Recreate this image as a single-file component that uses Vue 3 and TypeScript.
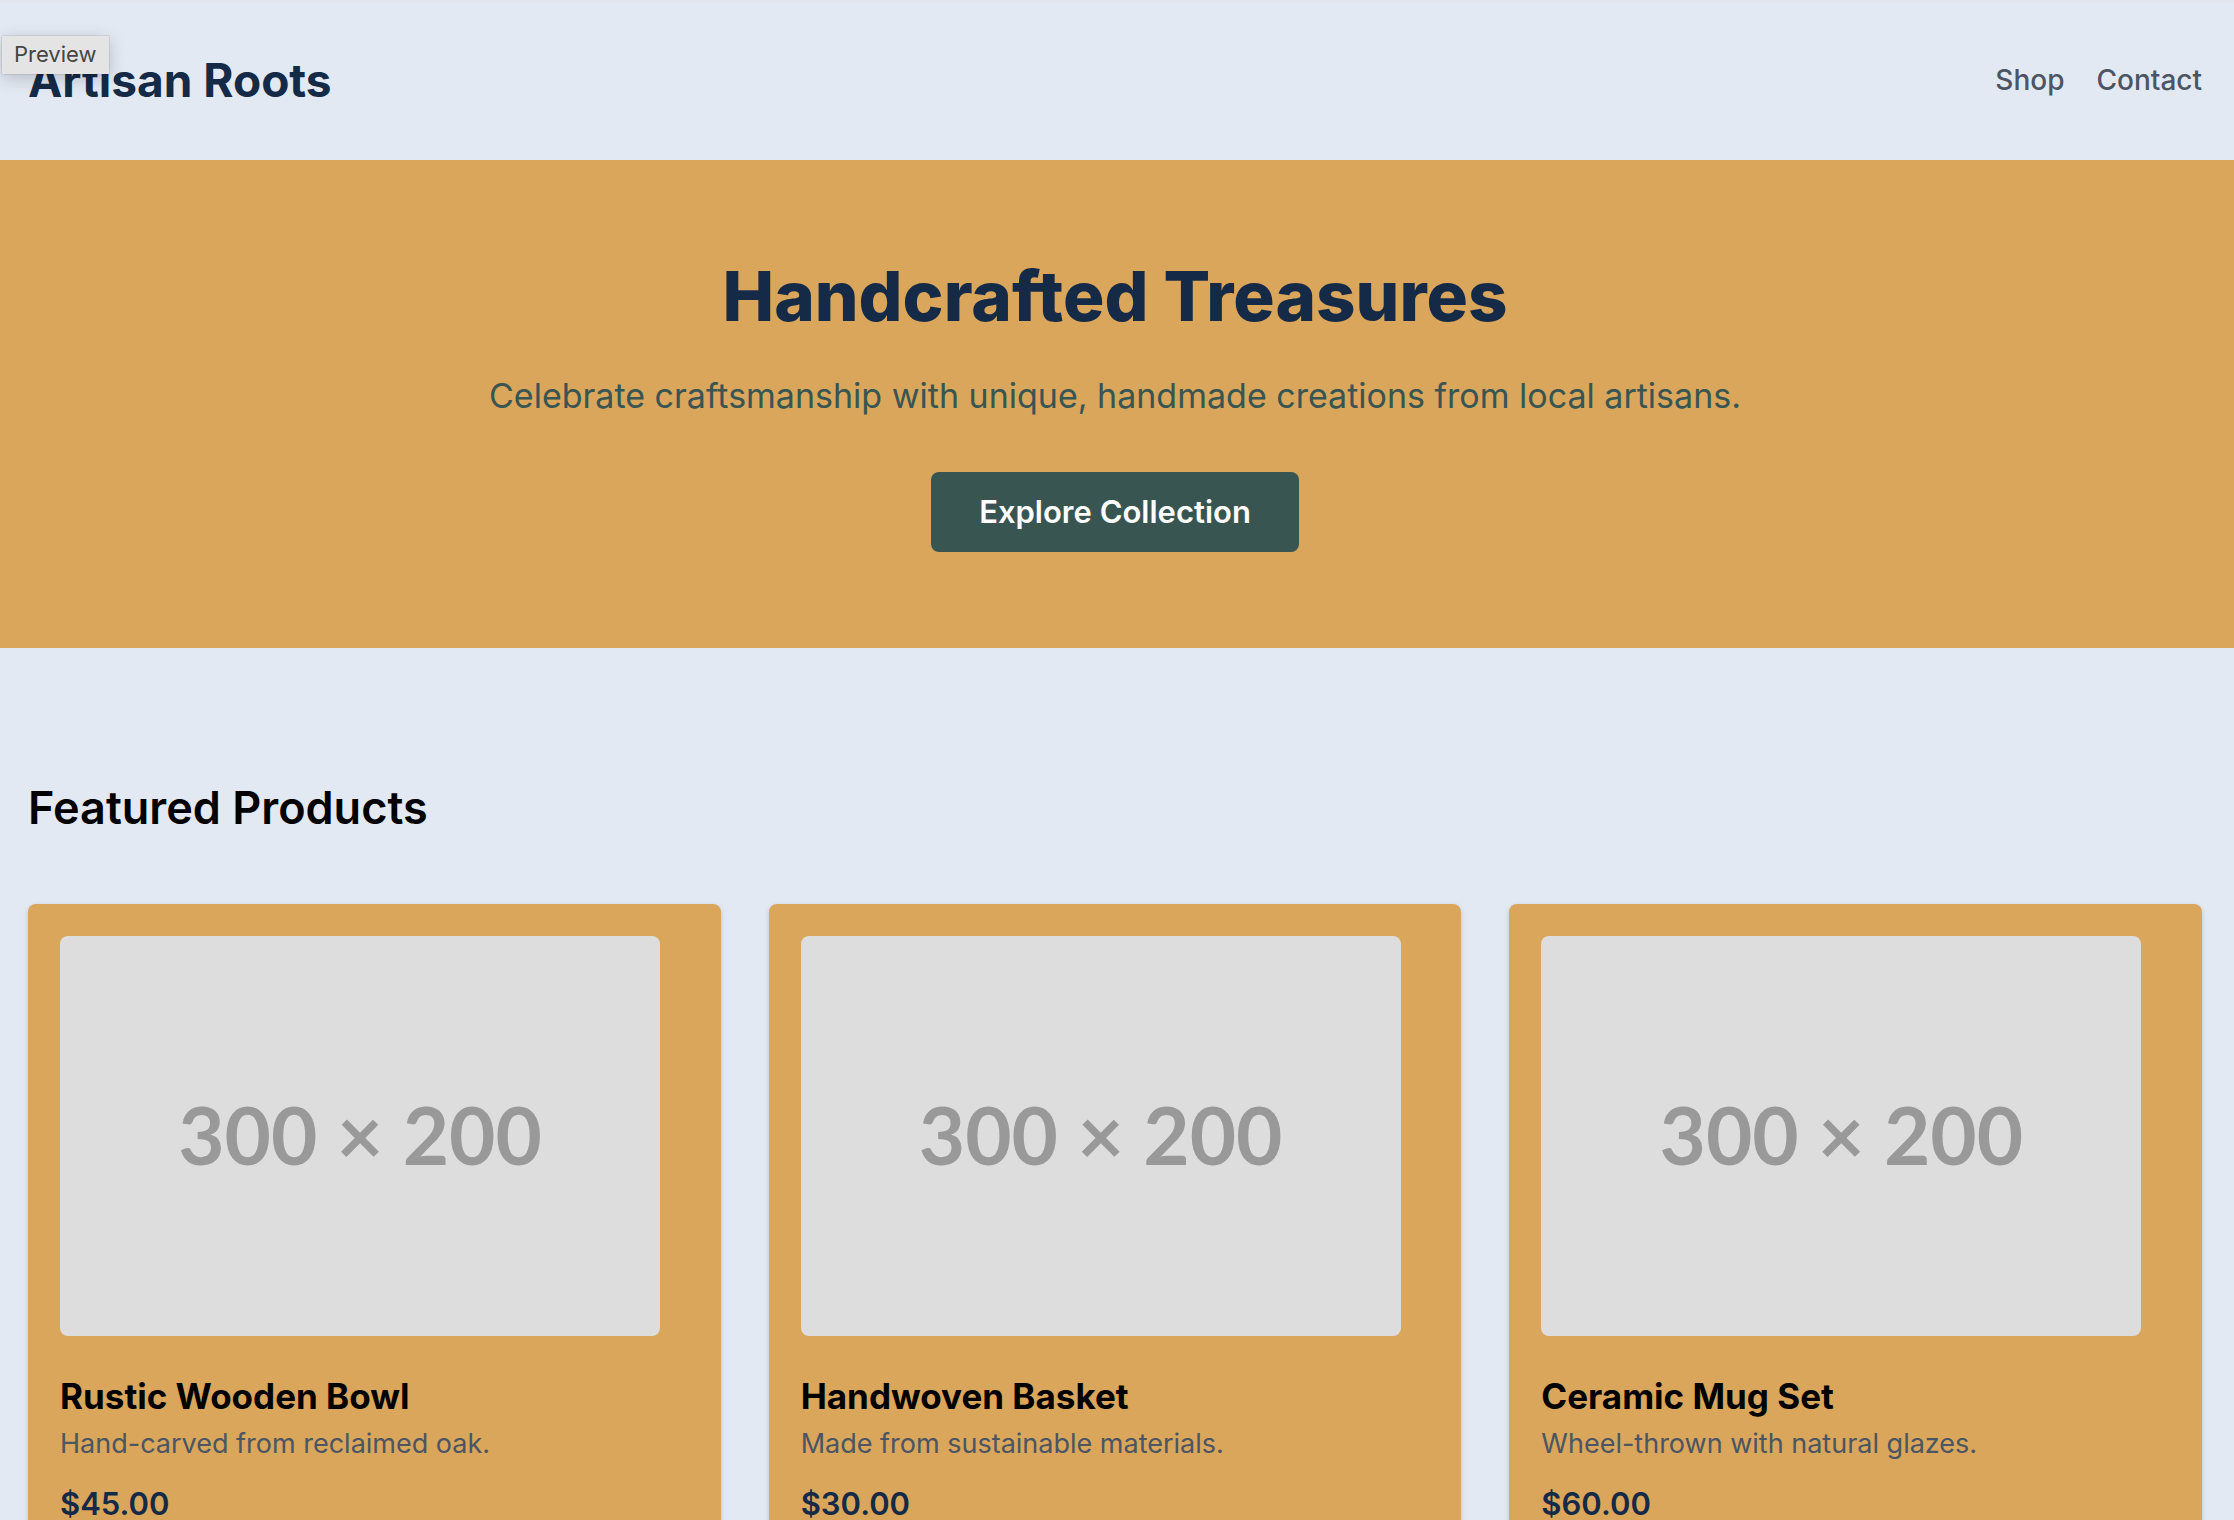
<script setup lang="ts">
interface Product {
  name: string
  description: string
  price: string
}

const products: Product[] = [
  { name: 'Rustic Wooden Bowl', description: 'Hand-carved from reclaimed oak.', price: '$45.00' },
  { name: 'Handwoven Basket', description: 'Made from sustainable materials.', price: '$30.00' },
  { name: 'Ceramic Mug Set', description: 'Wheel-thrown with natural glazes.', price: '$60.00' },
]
</script>

<template>
  <div class="page">
    <div class="tooltip" role="tooltip">Preview</div>
    <header class="header">
      <h1 class="logo">Artisan Roots</h1>
      <nav class="nav">
        <a href="#shop">Shop</a>
        <a href="#contact">Contact</a>
      </nav>
    </header>
    <section class="hero">
      <h2 class="hero-title">Handcrafted Treasures</h2>
      <p class="hero-text">Celebrate craftsmanship with unique, handmade creations from local artisans.</p>
      <button class="cta" type="button">Explore Collection</button>
    </section>
    <main id="shop" class="featured">
      <h2 class="section-title">Featured Products</h2>
      <div class="grid">
        <article v-for="product in products" :key="product.name" class="card">
          <div class="thumb">300 × 200</div>
          <h3 class="name">{{ product.name }}</h3>
          <p class="description">{{ product.description }}</p>
          <p class="price">{{ product.price }}</p>
        </article>
      </div>
    </main>
  </div>
</template>

<style>
body {
  margin: 0;
  background: #e3e9f3;
}
</style>

<style scoped>
.page {
  position: relative;
  box-sizing: border-box;
  min-height: 100vh;
  background: #e3e9f3;
  color: #000;
  font-family: Inter, "Liberation Sans", sans-serif;
}
h1, h2, h3, p {
  margin: 0;
}
.tooltip {
  position: absolute;
  top: 36px;
  left: 2px;
  z-index: 1;
  box-sizing: border-box;
  height: 38px;
  padding: 0 12px;
  background: #e4e4e4;
  color: #454545;
  font-size: 22px;
  line-height: 37px;
  box-shadow: 0 0 1px rgba(0, 0, 0, 0.4), 0 4px 18px rgba(0, 0, 0, 0.2);
}
.header {
  display: flex;
  align-items: center;
  justify-content: space-between;
  box-sizing: border-box;
  height: 160px;
  padding: 0 32px 0 28px;
  box-shadow: inset 0 2px #e2e6ec;
}
.logo {
  color: #152a46;
  font-size: 46px;
  line-height: 64px;
  font-weight: 700;
}
.nav {
  display: flex;
  gap: 32px;
}
.nav a {
  color: #4b5563;
  font-size: 28px;
  line-height: 40px;
  font-weight: 500;
  text-decoration: none;
}
.hero {
  display: flex;
  flex-direction: column;
  align-items: center;
  padding: 96px 4px 96px 0;
  background: #d9a65b;
  text-align: center;
}
.hero-title {
  margin-bottom: 32px;
  color: #152a46;
  font-size: 69px;
  line-height: 80px;
  font-weight: 800;
}
.hero-text {
  margin-bottom: 48px;
  color: #385552;
  font-size: 34px;
  line-height: 56px;
}
.cta {
  height: 80px;
  padding: 0 48px;
  border: 0;
  border-radius: 8px;
  background: #385552;
  color: #fff;
  font-family: inherit;
  font-size: 31px;
  line-height: 48px;
  font-weight: 600;
}
.featured {
  padding: 128px 32px 128px 28px;
}
.section-title {
  margin-bottom: 64px;
  font-size: 45px;
  line-height: 64px;
  font-weight: 600;
}
.grid {
  display: grid;
  grid-template-columns: repeat(3, minmax(0, 1fr));
  gap: 48px;
}
.card {
  padding: 32px;
  border-radius: 8px;
  background: #d9a65b;
  box-shadow: 0 2px 6px rgba(0, 0, 0, 0.1), 0 2px 4px rgba(0, 0, 0, 0.06);
}
.thumb {
  display: flex;
  align-items: center;
  justify-content: center;
  box-sizing: border-box;
  max-width: 600px;
  height: 400px;
  margin-bottom: 32px;
  padding-bottom: 4px;
  border-radius: 8px;
  background: #ddd;
  color: #999;
  font-family: Lato, sans-serif;
  font-size: 80px;
  font-weight: 700;
}
.name {
  font-size: 35px;
  line-height: 56px;
  font-weight: 700;
}
.description {
  margin-bottom: 16px;
  color: #4b5563;
  font-size: 27px;
  line-height: 40px;
}
.price {
  color: #152a46;
  font-size: 31px;
  line-height: 48px;
  font-weight: 600;
}
</style>
